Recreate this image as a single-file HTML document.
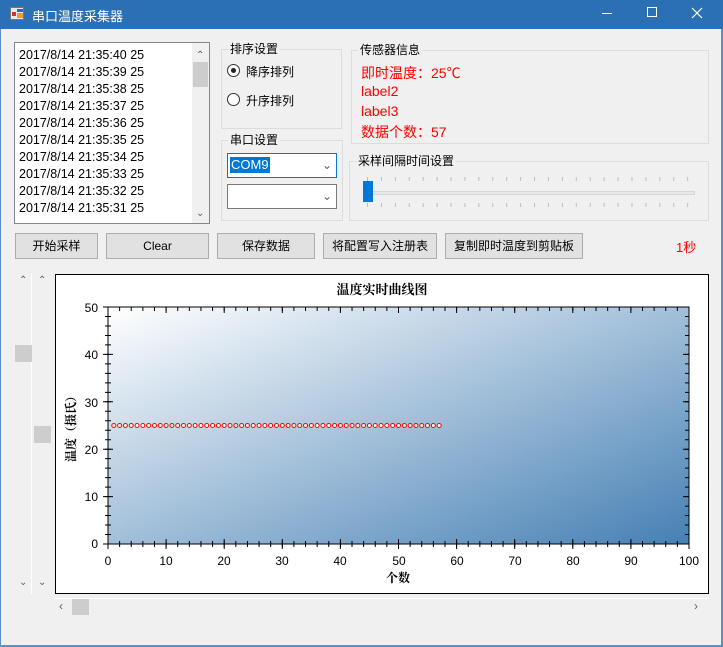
<!DOCTYPE html>
<html><head><meta charset="utf-8"><style>
*{margin:0;padding:0;box-sizing:border-box}
body{width:723px;height:647px;background:#f0f0f0;position:relative;overflow:hidden;font-family:"Liberation Sans","Noto Sans CJK SC",sans-serif;font-size:12px;color:#000}
.a{position:absolute}
.tb{left:0;top:0;width:723px;height:29px;background:#2b6fb5;color:#fff}
.grp{position:absolute;border:1px solid #dcdcdc}
.grp span{position:absolute;top:-9px;left:6px;background:#f0f0f0;padding:0 2px;font-size:12px;line-height:16px}
.btn{position:absolute;top:233px;height:26px;border:1px solid #adadad;background:#e1e1e1;text-align:center;line-height:24px;font-size:12px}
.red{color:#f00;font-size:14px}
.th{position:absolute;background:#cdcdcd}
.arr{position:absolute;color:#606060;font-size:10px}
</style></head><body>
<div class="a tb">
 <div class="a" style="left:10px;top:7px;width:14px;height:13px;background:#e8e8e8;border:1px solid #777"><div class="a" style="left:1px;top:4px;width:4px;height:4px;background:#c33"></div><div class="a" style="left:6px;top:5px;width:6px;height:5px;background:#e8a020"></div><div class="a" style="left:6px;top:1px;width:6px;height:3px;background:#3060c0"></div></div>
 <div class="a" style="left:32px;top:6px;font-size:13px">串口温度采集器</div>
 <div class="a" style="left:602px;top:13px;width:10px;height:1px;background:#fff"></div>
 <div class="a" style="left:647px;top:7px;width:10px;height:10px;border:1px solid #fff"></div>
 <svg class="a" style="left:691px;top:7px" width="12" height="12"><path d="M1 1L11 11M11 1L1 11" stroke="#fff" stroke-width="1.2"/></svg>
</div>
<div class="a" style="left:0;top:29px;width:1px;height:618px;background:#5a8fc8"></div>
<div class="a" style="left:721px;top:29px;width:2px;height:618px;background:#5a8fc8"></div>
<div class="a" style="left:0;top:645px;width:723px;height:2px;background:#5a8fc8"></div>

<div class="a" style="left:14px;top:42px;width:196px;height:182px;background:#fff;border:1px solid #828790;font-size:12.5px;line-height:17px;padding:4px 0 0 4px">
2017/8/14 21:35:40 25<br>2017/8/14 21:35:39 25<br>2017/8/14 21:35:38 25<br>2017/8/14 21:35:37 25<br>2017/8/14 21:35:36 25<br>2017/8/14 21:35:35 25<br>2017/8/14 21:35:34 25<br>2017/8/14 21:35:33 25<br>2017/8/14 21:35:32 25<br>2017/8/14 21:35:31 25
 <div class="a" style="left:177px;top:0;width:17px;height:180px;background:#f0f0f0"></div>
 <div class="th" style="left:178px;top:19px;width:15px;height:25px"></div>
 <div class="arr" style="left:181px;top:4px">&#8963;</div>
 <div class="arr" style="left:181px;top:162px">&#8964;</div>
</div>

<div class="grp" style="left:221px;top:49px;width:121px;height:80px"><span>排序设置</span></div>
<div class="a" style="left:227px;top:64px;width:13px;height:13px;border:1px solid #333;border-radius:50%;background:#fff"><div class="a" style="left:3px;top:3px;width:5px;height:5px;border-radius:50%;background:#222"></div></div>
<div class="a" style="left:246px;top:63px">降序排列</div>
<div class="a" style="left:227px;top:93px;width:13px;height:13px;border:1px solid #333;border-radius:50%;background:#fff"></div>
<div class="a" style="left:246px;top:92px">升序排列</div>

<div class="grp" style="left:221px;top:140px;width:122px;height:81px"><span>串口设置</span></div>
<div class="a" style="left:227px;top:153px;width:110px;height:25px;border:1px solid #0078d7;background:#fff"><div class="a" style="left:2px;top:3px;background:#0078d7;color:#fff;font-size:13px;line-height:16px;padding:0 1px">COM9</div><div class="arr" style="left:94px;top:4px;font-size:12px">&#8964;</div></div>
<div class="a" style="left:227px;top:184px;width:110px;height:25px;border:1px solid #7a7a7a;background:#fff"><div class="arr" style="left:94px;top:4px;font-size:12px">&#8964;</div></div>

<div class="grp" style="left:351px;top:50px;width:358px;height:94px"><span>传感器信息</span></div>
<div class="a red" style="left:361px;top:63px">即时温度：25℃</div>
<div class="a red" style="left:361px;top:83px">label2</div>
<div class="a red" style="left:361px;top:103px">label3</div>
<div class="a red" style="left:361px;top:122px">数据个数：57</div>

<div class="grp" style="left:349px;top:161px;width:360px;height:60px"><span>采样间隔时间设置</span></div>
<div class="a" style="left:369px;top:191px;width:326px;height:4px;background:#e7e7e7;border:1px solid #d6d6d6"></div>
<svg class="a" style="left:360px;top:175px" width="340" height="35"><line x1="7" y1="4" x2="330" y2="4" stroke="#bbb" stroke-width="4" stroke-dasharray="1 12.92"/><line x1="7" y1="30" x2="330" y2="30" stroke="#bbb" stroke-width="4" stroke-dasharray="1 12.92"/></svg>
<div class="a" style="left:363px;top:181px;width:10px;height:21px;background:#0078d7"></div>

<div class="btn" style="left:15px;width:83px">开始采样</div>
<div class="btn" style="left:106px;width:103px">Clear</div>
<div class="btn" style="left:217px;width:98px">保存数据</div>
<div class="btn" style="left:323px;width:114px">将配置写入注册表</div>
<div class="btn" style="left:445px;width:138px">复制即时温度到剪贴板</div>
<div class="a" style="left:676px;top:237px;color:#f00;font-size:13px">1秒</div>

<div class="a" style="left:14px;top:274px;width:18px;height:320px;border-right:1px solid #fff"></div>
<div class="th" style="left:15px;top:345px;width:17px;height:17px"></div>
<div class="th" style="left:34px;top:426px;width:17px;height:17px"></div>
<div class="arr" style="left:19px;top:275px">&#8963;</div><div class="arr" style="left:38px;top:275px">&#8963;</div>
<div class="arr" style="left:19px;top:577px">&#8964;</div><div class="arr" style="left:38px;top:577px">&#8964;</div>
<div class="a" style="left:55px;top:598px;width:653px;height:1px;background:#fff"></div>
<div class="th" style="left:72px;top:599px;width:17px;height:16px"></div>
<div class="arr" style="left:59px;top:599px;font-size:12px">&lsaquo;</div>
<div class="arr" style="left:694px;top:599px;font-size:12px">&rsaquo;</div>

<svg class="a" style="left:0;top:0" width="723" height="647" font-family="Liberation Sans, sans-serif">
<defs><linearGradient id="g" x1="0" y1="0" x2="1" y2="1"><stop offset="0" stop-color="#ffffff"/><stop offset="1" stop-color="#4680b4"/></linearGradient></defs>
<rect x="55.5" y="274.5" width="653" height="319" fill="#fff" stroke="#000"/>
<rect x="108" y="307" width="581" height="237" fill="url(#g)"/>
<!-- bottom axis ticks -->
<line x1="107.5" y1="544" x2="690" y2="544" stroke="#000" stroke-width="6" stroke-dasharray="1 10.62"/>
<line x1="107.5" y1="544" x2="690" y2="544" stroke="#000" stroke-width="10" stroke-dasharray="1 57.1"/>
<!-- top axis ticks (inward) -->
<line x1="107.5" y1="309" x2="690" y2="309" stroke="#000" stroke-width="4" stroke-dasharray="1 10.62"/>
<line x1="107.5" y1="310" x2="690" y2="310" stroke="#000" stroke-width="6" stroke-dasharray="1 57.1"/>
<!-- left axis ticks -->
<line x1="108" y1="544.5" x2="108" y2="306" stroke="#000" stroke-width="6" stroke-dasharray="1 8.48"/>
<line x1="108" y1="544.5" x2="108" y2="306" stroke="#000" stroke-width="10" stroke-dasharray="1 46.4"/>
<!-- right axis ticks (inward) -->
<line x1="687" y1="544.5" x2="687" y2="306" stroke="#000" stroke-width="4" stroke-dasharray="1 8.48"/>
<line x1="686" y1="544.5" x2="686" y2="306" stroke="#000" stroke-width="6" stroke-dasharray="1 46.4"/>
<rect x="108" y="307" width="581" height="237" fill="none" stroke="#000"/>
<line x1="113.8" y1="425.5" x2="441" y2="425.5" stroke="#f00" stroke-width="5" stroke-linecap="round" stroke-dasharray="0 5.81"/>
<line x1="113.8" y1="425.5" x2="441" y2="425.5" stroke="#fff" stroke-width="3" stroke-linecap="round" stroke-dasharray="0 5.81"/>
<g font-size="12" text-anchor="end">
<text x="98" y="312">50</text><text x="98" y="359">40</text><text x="98" y="407">30</text><text x="98" y="454">20</text><text x="98" y="501">10</text><text x="98" y="548">0</text>
</g>
<g font-size="12" text-anchor="middle">
<text x="108" y="565">0</text><text x="166" y="565">10</text><text x="224" y="565">20</text><text x="282" y="565">30</text><text x="340" y="565">40</text><text x="399" y="565">50</text><text x="457" y="565">60</text><text x="515" y="565">70</text><text x="573" y="565">80</text><text x="631" y="565">90</text><text x="689" y="565">100</text>
</g>
<text x="382" y="294" font-size="13" font-weight="bold" text-anchor="middle" font-family="Noto Serif CJK SC, serif">温度实时曲线图</text>
<text x="398" y="582" font-size="12" font-weight="bold" text-anchor="middle" font-family="Noto Serif CJK SC, serif">个数</text>
<text transform="translate(75 426) rotate(-90)" font-size="12" font-weight="bold" text-anchor="middle" font-family="Noto Serif CJK SC, serif">温度（摄氏）</text>
</svg>
</body></html>
